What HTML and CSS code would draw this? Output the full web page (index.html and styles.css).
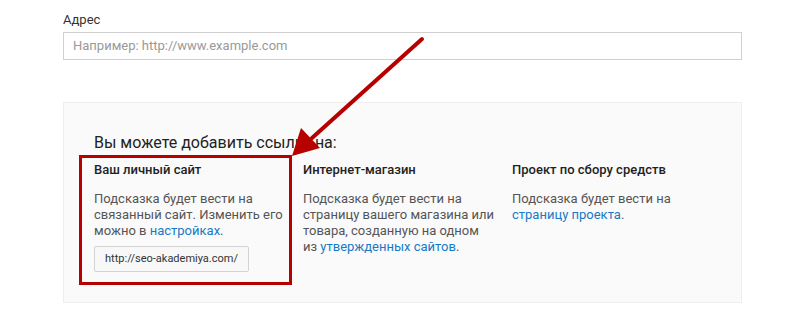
FILE: index.html
```html
<!DOCTYPE html>
<html lang="ru">
<head>
<meta charset="utf-8">
<link rel="stylesheet" href="styles.css">
</head>
<body>
<div class="page">
  <div class="field">
    <div class="label">Адрес</div>
    <div class="input">Например: http://www.example.com</div>
  </div>
  <div class="panel">
    <h2 class="heading">Вы можете добавить ссылку на:</h2>
    <div class="cols">
      <div class="col">
        <div class="col-title">Ваш личный сайт</div>
        <p class="col-text">Подсказка будет вести на связанный сайт. Изменить его можно в <a class="link">настройках</a>.</p>
        <div class="btn">http://seo-akademiya.com/</div>
      </div>
      <div class="col">
        <div class="col-title">Интернет-магазин</div>
        <p class="col-text">Подсказка будет вести на страницу вашего магазина или товара, созданную на одном из <a class="link">утвержденных сайтов</a>.</p>
      </div>
      <div class="col">
        <div class="col-title">Проект по сбору средств</div>
        <p class="col-text">Подсказка будет вести на <a class="link">страницу проекта</a>.</p>
      </div>
    </div>
  </div>
</div>
<svg class="annot" width="800" height="310" viewBox="0 0 800 310">
  <rect x="80.5" y="156.5" width="210" height="127" fill="none" stroke="#b70000" stroke-width="3"/>
  <line x1="422" y1="39" x2="312" y2="138" stroke="#b70000" stroke-width="4" stroke-linecap="round"/>
  <polygon points="292,156 301,128 320,148" fill="#b70000"/>
</svg>
</body>
</html>
```
FILE: styles.css
```css
html, body {
  margin: 0;
  padding: 0;
  background: #fff;
}
body {
  font-family: Roboto, "Liberation Sans", Arial, sans-serif;
  color: #333;
  width: 800px;
  height: 310px;
  overflow: hidden;
  position: relative;
}
.page {
  padding-left: 63px;
  width: 679px;
}
.field {
  padding-top: 12px;
}
.label {
  font-size: 13px;
  line-height: 16px;
  color: #333;
  height: 20px;
}
.input {
  box-sizing: border-box;
  height: 28px;
  border: 1px solid #d0d0d0;
  padding: 0 9px;
  font-size: 13px;
  line-height: 26px;
  color: #999;
}
.panel {
  margin-top: 42px;
  box-sizing: border-box;
  height: 201px;
  background: #fafafa;
  border: 1px solid #eee;
  padding: 29px 30px 0;
}
.heading {
  margin: 0;
  font-size: 16px;
  line-height: 22px;
  font-weight: 400;
  color: #222;
}
.cols {
  margin-top: 8px;
  display: grid;
  grid-template-columns: 193px 193px 193px;
  column-gap: 16px;
}
.col-title {
  font-size: 13px;
  line-height: 16px;
  font-weight: 500;
  color: #222;
}
.col-text {
  margin: 13px 0 0;
  font-size: 13px;
  line-height: 16px;
  color: #555;
}
.link {
  color: #167ac6;
  text-decoration: none;
}
.btn {
  margin-top: 7px;
  box-sizing: border-box;
  width: 155px;
  height: 26px;
  border: 1px solid #d3d3d3;
  border-radius: 2px;
  background: #f8f8f8;
  font-size: 11px;
  line-height: 24px;
  color: #333;
  text-align: center;
}
.annot {
  position: absolute;
  left: 0;
  top: 0;
  pointer-events: none;
}
```
